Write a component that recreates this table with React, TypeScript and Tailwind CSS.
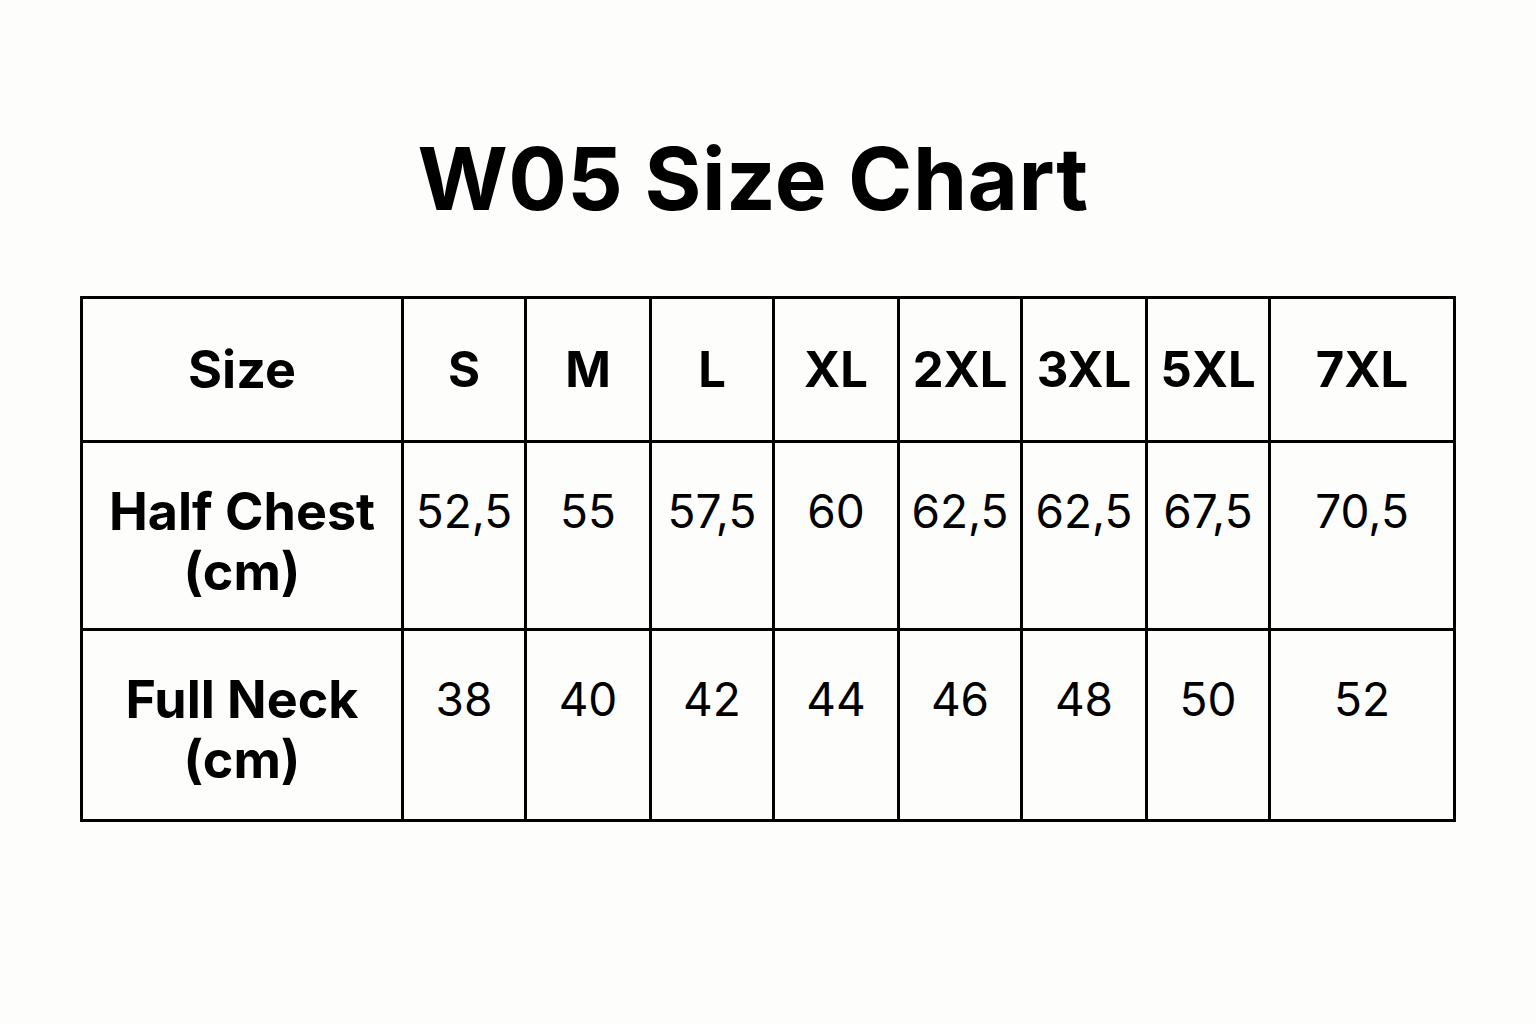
import React from "react";

const sizes = ["S", "M", "L", "XL", "2XL", "3XL", "5XL", "7XL"];
const halfChest = ["52,5", "55", "57,5", "60", "62,5", "62,5", "67,5", "70,5"];
const fullNeck = ["38", "40", "42", "44", "46", "48", "50", "52"];
const colWidths = ["w-[123px]", "w-[125px]", "w-[123px]", "w-[125px]", "w-[123px]", "w-[125px]", "w-[123px]", "w-[185px]"];

const cell = "border-[3px] border-black text-center px-0";

export default function App() {
  return (
    <div className="min-h-screen w-full bg-[#fdfdfb] text-black font-['Inter','Liberation_Sans',sans-serif]">
      <div className="flex flex-col items-center pt-[131px]">
        <h1 className="pr-[30px] text-[87px] font-bold leading-[96px] tracking-[0.5px]">W05 Size Chart</h1>
        <table className="mt-[69px] table-fixed border-collapse">
          <colgroup>
            <col className="w-[321px]" />
            {colWidths.map((w, i) => (
              <col key={i} className={w} />
            ))}
          </colgroup>
          <tbody>
            <tr className="h-[144px]">
              <td className={`${cell} align-middle text-[52px] font-bold leading-[62px]`}>Size</td>
              {sizes.map((s) => (
                <td key={s} className={`${cell} align-middle text-[49px] font-bold leading-[62px]`}>
                  {s}
                </td>
              ))}
            </tr>
            <tr className="h-[188px]">
              <td className={`${cell} align-top pt-[39px] text-[52px] font-bold leading-[60px]`}>
                Half Chest
                <br />
                (cm)
              </td>
              {halfChest.map((v, i) => (
                <td key={i} className={`${cell} align-top pt-[37px] text-[46px] leading-[62px]`}>
                  {v}
                </td>
              ))}
            </tr>
            <tr className="h-[191px]">
              <td className={`${cell} align-top pt-[39px] text-[52px] font-bold leading-[60px]`}>
                Full Neck
                <br />
                (cm)
              </td>
              {fullNeck.map((v, i) => (
                <td key={i} className={`${cell} align-top pt-[37px] text-[46px] leading-[62px]`}>
                  {v}
                </td>
              ))}
            </tr>
          </tbody>
        </table>
      </div>
    </div>
  );
}
